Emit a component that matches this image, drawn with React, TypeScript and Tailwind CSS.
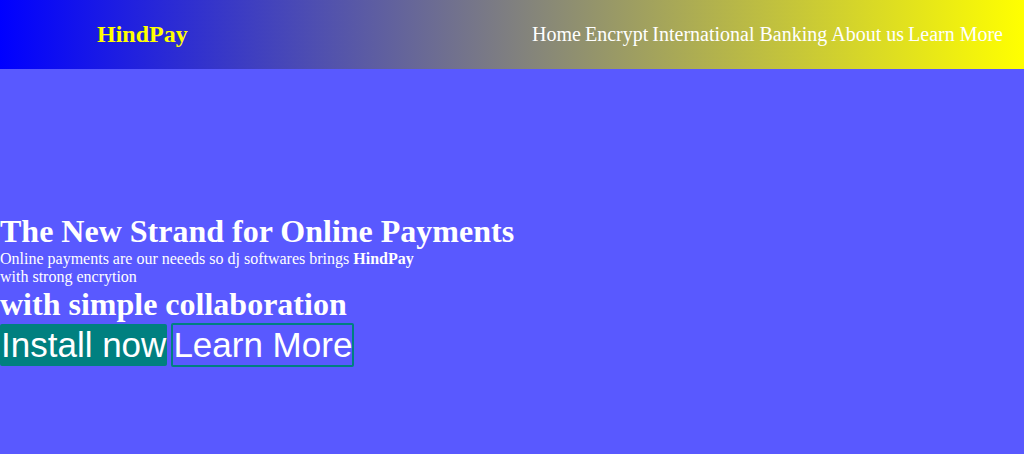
const links = ['Home', 'Encrypt', 'International Banking', 'About us', 'Learn More'];

export default function App() {
  return (
    <div className="flex min-h-screen flex-col bg-[#5959ff] font-['Liberation_Serif',serif] text-white">
      <header className="flex items-center justify-between bg-linear-to-r/srgb from-[#0000ff] to-[#ffff00] py-5 pr-[21px] pl-[97px]">
        <a href="#" className="text-2xl leading-[29px] font-bold text-[#ffff00]">
          HindPay
        </a>
        <nav className="flex gap-1 text-xl leading-[29px]">
          {links.map((label) => (
            <a key={label} href="#">
              {label}
            </a>
          ))}
        </nav>
      </header>
      <main className="flex flex-1 flex-col justify-center pt-14">
        <h1 className="text-[32px] leading-[37px] font-bold">The New Strand for Online Payments</h1>
        <p className="text-base leading-[18px]">
          Online payments are our neeeds so dj softwares brings <strong>HindPay</strong>
          <br />
          with strong encrytion
        </p>
        <h2 className="text-[32px] leading-[37px] font-bold">with simple collaboration</h2>
        <div className="flex items-center gap-1 font-['Liberation_Sans',sans-serif] text-[35px] leading-10">
          <button type="button" className="rounded-xs bg-[#008080] px-px py-px">
            Install now
          </button>
          <button type="button" className="rounded-xs border-2 border-[#008080]">
            Learn More
          </button>
        </div>
      </main>
    </div>
  );
}
